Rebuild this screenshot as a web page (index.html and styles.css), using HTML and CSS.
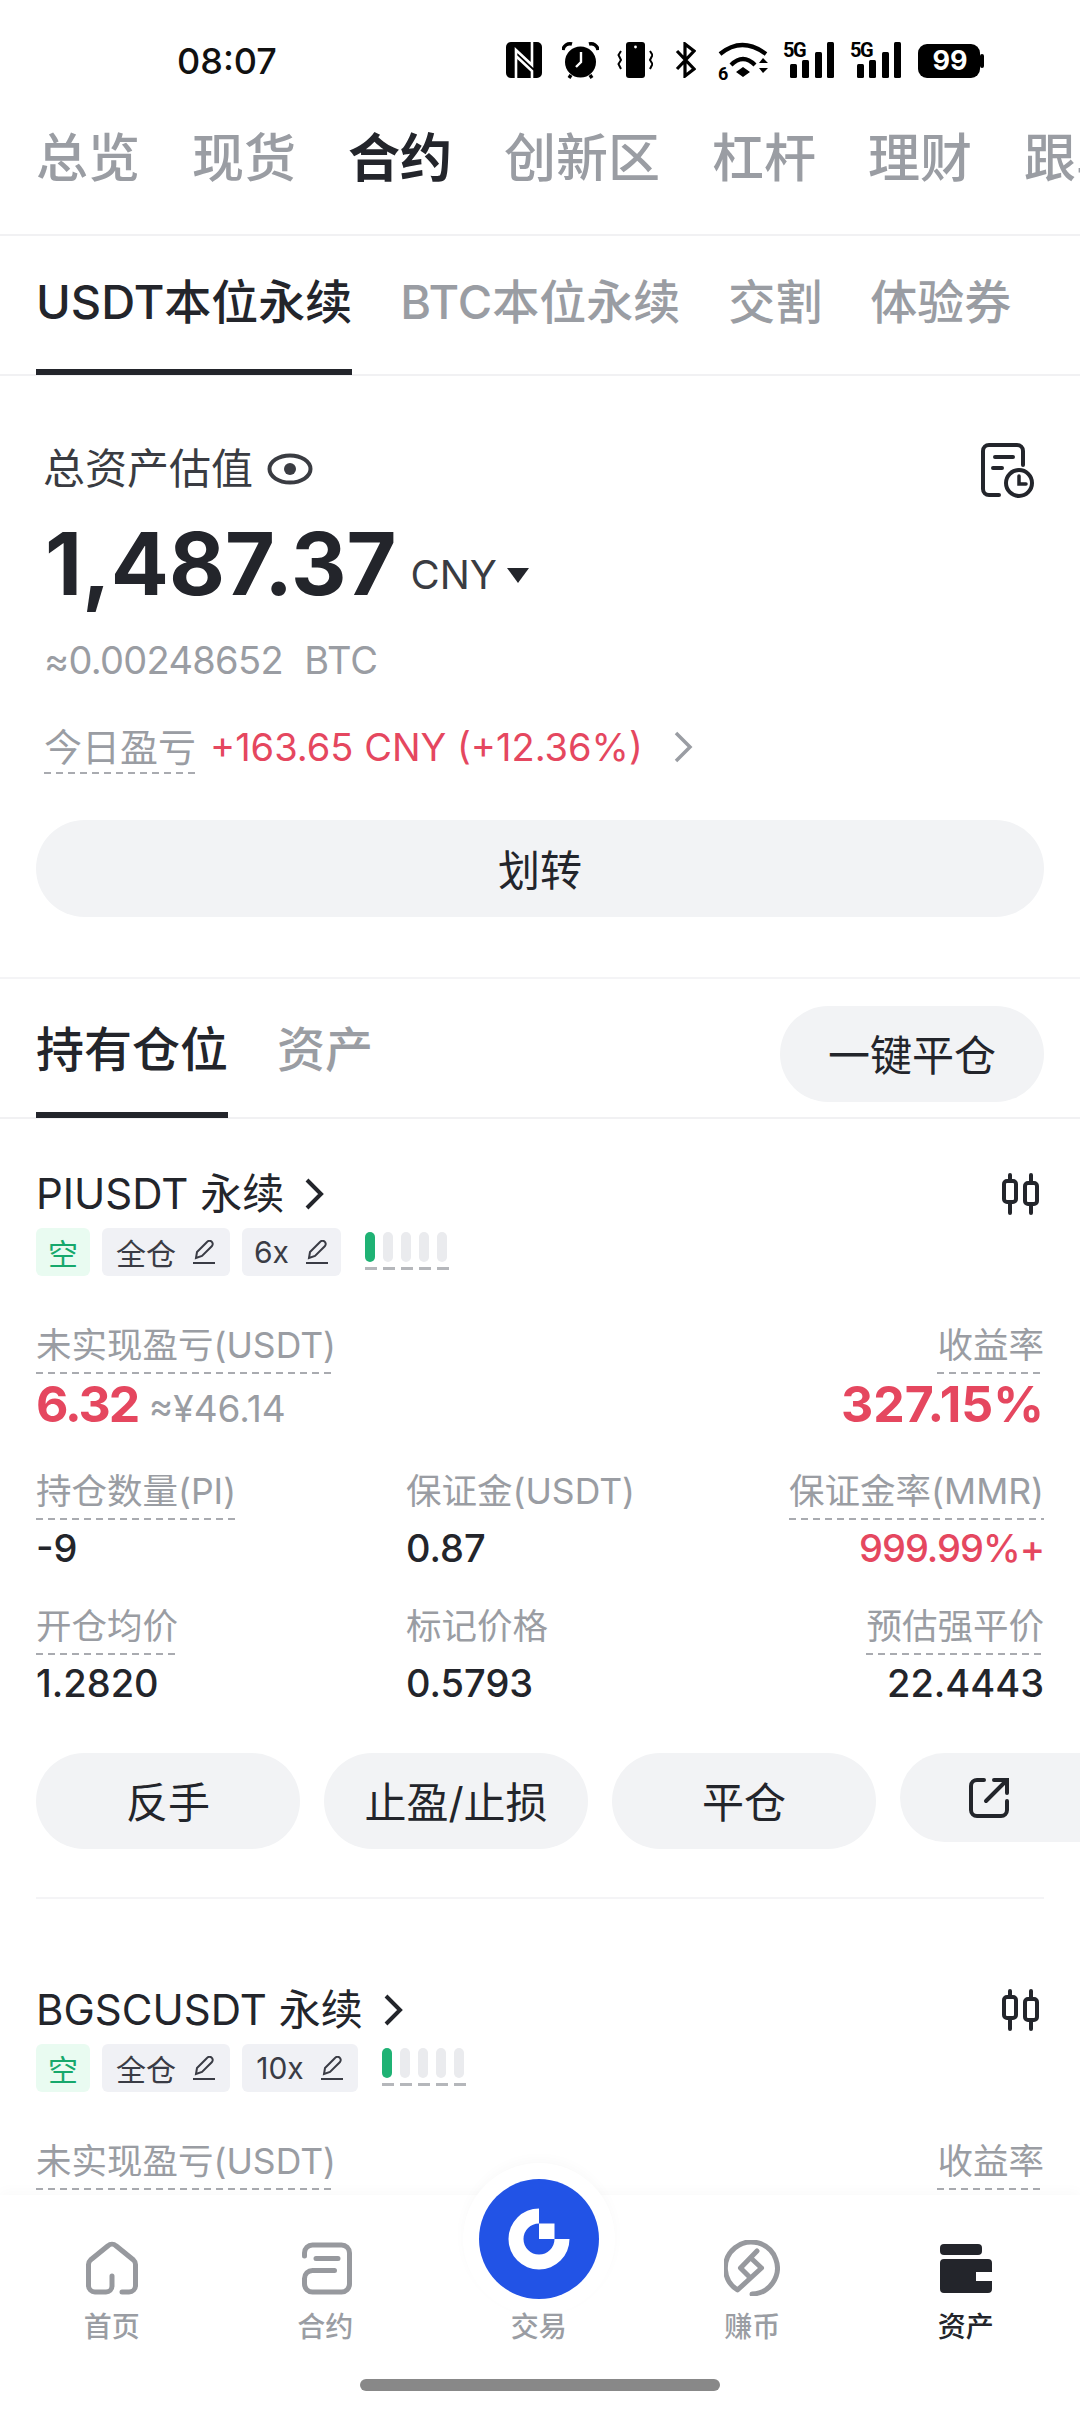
FILE: index.html
```html
<!DOCTYPE html>
<html lang="zh-CN">
<head>
    <meta charset="UTF-8">
    <meta name="viewport" content="width=device-width, initial-scale=1.0">
    <title>资产</title>
    <link rel="stylesheet" href="styles.css">
</head>
<body>
<div class="phone">
    <div class="status-bar">
        <span class="time">08:07</span>
        <div class="status-icons">
            <svg class="st-nfc" width="36" height="36" viewBox="0 0 36 36"><rect width="36" height="36" rx="5" fill="#000"/><path d="M10 36V8l16 15V0M10 14l16 15v7" fill="none" stroke="#fff" stroke-width="2.6"/></svg>
            <svg class="st-alarm" width="37" height="38" viewBox="0 0 37 38"><circle cx="18.5" cy="21" r="15.5" fill="#000"/><path d="M1 9a7 7 0 0 1 9-6M36 9a7 7 0 0 0-9-6M7 37l2-3M30 37l-2-3" fill="none" stroke="#000" stroke-width="3.4"/><path d="M19 11v10l-5 5" fill="none" stroke="#fff" stroke-width="2.4"/></svg>
            <svg class="st-vib" width="36" height="36" viewBox="0 0 36 36"><rect x="9" width="19" height="36" rx="3" fill="#000"/><circle cx="18.5" cy="5" r="1.4" fill="#fff"/><path d="M4 9l-2.500 4 2.500 5-2.500 4 2.500 5M33 9l2.500 4-2.500 5 2.500 4-2.500 5" fill="none" stroke="#000" stroke-width="2"/></svg>
            <svg class="st-bt" width="21" height="36" viewBox="0 0 21 36"><path d="M2 9l17 18-9 7V2l9 7L2 27" fill="none" stroke="#000" stroke-width="3.2"/></svg>
            <svg class="st-wifi" width="51" height="46" viewBox="0 0 51 46"><path d="M2 12Q24-6 48 12M13 23Q25 11 37 23" fill="none" stroke="#000" stroke-width="4.200"/><path d="M18 30l7-5 7 5-7 5zM41 21l4-5 5 5zM41 26h9l-5 5z" fill="#000"/><text class="st-num" x="0" y="38">6</text></svg>
            <svg class="st-sig" width="52" height="44" viewBox="0 -8 52 44"><text class="st-5g" x="0" y="15">5G</text><rect x="7" y="22" width="7" height="14" rx="1.500"/><rect x="19" y="18" width="7" height="18" rx="1.500"/><rect x="32" y="10" width="7" height="26" rx="1.500"/><rect x="44" width="7" height="36" rx="1.500"/></svg>
            <svg class="st-sig2" width="52" height="44" viewBox="0 -8 52 44"><text class="st-5g" x="0" y="15">5G</text><rect x="7" y="22" width="7" height="14" rx="1.500"/><rect x="19" y="18" width="7" height="18" rx="1.500"/><rect x="32" y="10" width="7" height="26" rx="1.500"/><rect x="44" width="7" height="36" rx="1.500"/></svg>
            <svg class="st-batt" width="66" height="34" viewBox="0 0 66 34"><rect width="62" height="34" rx="9"/><rect x="62" y="10" width="4" height="14" rx="2"/><text class="st-batt-num" x="32" y="26">99</text></svg>
        </div>
    </div>

    <div class="top-tabs">
        <span>总览</span>
        <span>现货</span>
        <span class="active">合约</span>
        <span>创新区</span>
        <span>杠杆</span>
        <span>理财</span>
        <span>跟单</span>
    </div>

    <div class="sub-tabs">
        <span class="sub-tab active">USDT本位永续</span>
        <span class="sub-tab">BTC本位永续</span>
        <span class="sub-tab">交割</span>
        <span class="sub-tab">体验券</span>
    </div>

    <section class="asset">
        <div class="asset-head">
            <div class="asset-title">
                总资产估值
                <svg width="46" height="32" viewBox="0 0 46 32"><ellipse cx="23" cy="16" rx="20.500" ry="13.500" fill="none" stroke="#3a3c42" stroke-width="4"/><circle cx="23" cy="16" r="6" fill="#3a3c42"/></svg>
            </div>
            <svg class="history" width="54" height="55" viewBox="0 0 54 55" fill="none" stroke="#23252b" stroke-width="4" stroke-linecap="round"><path d="M18 52H8a6 6 0 0 1-6-6V8a6 6 0 0 1 6-6h28a6 6 0 0 1 6 6v14M14 14h18M12 25h9"/><circle cx="38" cy="40" r="13"/><path d="M38 33v8h7" stroke-width="3.500"/></svg>
        </div>
        <div class="amount-row">
            <span class="amount">1,487.37</span>
            <span class="currency">CNY</span>
            <span class="caret"></span>
        </div>
        <div class="btc-row"><span class="btc-num">≈0.00248652</span>&nbsp; BTC</div>
        <div class="pnl-row">
            <span class="dotted pnl-label">今日盈亏</span>
            <span class="red">+163.65 CNY (+12.36%)</span>
            <svg width="20" height="32" viewBox="0 0 20 32" fill="none" stroke="#9a9da3" stroke-width="3.500"><path d="M3 2l14 14L3 30"/></svg>
        </div>
        <div class="pill wide-btn">划转</div>
    </section>

    <div class="pos-tabs">
        <span class="pos-tab active">持有仓位</span>
        <span class="pos-tab">资产</span>
        <div class="pill close-all">一键平仓</div>
    </div>

    <section class="card first">
        <div class="card-head">
            <div class="symbol">
                PIUSDT 永续
                <svg width="20" height="32" viewBox="0 0 20 32" fill="none" stroke="#23252b" stroke-width="4"><path d="M3 2l14 14L3 30"/></svg>
            </div>
            <svg class="candles" width="40" height="42" viewBox="0 0 40 42" fill="none" stroke="#23252b" stroke-width="4" stroke-linecap="round"><path d="M9 2v6M9 29v11M30 2v8M30 31v9"/><rect x="3" y="8" width="12" height="21" rx="3"/><rect x="24" y="10" width="12" height="21" rx="3"/></svg>
        </div>
        <div class="tags">
            <span class="tag tag-short">空</span>
            <span class="tag">全仓 <svg class="pencil" width="24" height="24" viewBox="0 0 24 24" fill="none" stroke="#3a3c45" stroke-width="2"><path d="M1 23h22M4 18l1-6L15 2a2.800 2.800 0 0 1 5 4L10 16z"/></svg></span>
            <span class="tag tag-6x">6x <svg class="pencil" width="24" height="24" viewBox="0 0 24 24" fill="none" stroke="#3a3c45" stroke-width="2"><path d="M1 23h22M4 18l1-6L15 2a2.800 2.800 0 0 1 5 4L10 16z"/></svg></span>
            <div class="lev">
                <i class="on"></i><i></i><i></i><i></i><i></i>
            </div>
        </div>
        <div class="pnl-head">
            <span class="dotted">未实现盈亏(USDT)</span>
            <span class="dotted">收益率</span>
        </div>
        <div class="pnl-main">
            <div><span class="big tight red">6.32</span> <span class="approx">≈¥46.14</span></div>
            <span class="big red">327.15%</span>
        </div>
        <div class="stats">
            <div class="stat"><span class="dotted">持仓数量(PI)</span><b>-9</b></div>
            <div class="stat"><span class="plain">保证金(USDT)</span><b>0.87</b></div>
            <div class="stat right"><span class="dotted">保证金率(MMR)</span><b class="red">999.99%+</b></div>
            <div class="stat"><span class="dotted">开仓均价</span><b>1.2820</b></div>
            <div class="stat"><span class="plain">标记价格</span><b>0.5793</b></div>
            <div class="stat right"><span class="dotted">预估强平价</span><b>22.4443</b></div>
        </div>
        <div class="actions">
            <div class="pill act">反手</div>
            <div class="pill act">止盈/止损</div>
            <div class="pill act">平仓</div>
            <div class="pill act">
                <svg width="40" height="41" viewBox="0 0 40 41" fill="none" stroke="#23252b" stroke-width="4" stroke-linecap="round"><path d="M15 3H8a6 6 0 0 0-6 6v24a6 6 0 0 0 6 6h24a6 6 0 0 0 6-6v-9M17 24L37 4M25 3h13v13"/></svg>
            </div>
        </div>
    </section>

    <section class="card second">
        <div class="card-head">
            <div class="symbol">
                BGSCUSDT 永续
                <svg width="20" height="32" viewBox="0 0 20 32" fill="none" stroke="#23252b" stroke-width="4"><path d="M3 2l14 14L3 30"/></svg>
            </div>
            <svg class="candles" width="40" height="42" viewBox="0 0 40 42" fill="none" stroke="#23252b" stroke-width="4" stroke-linecap="round"><path d="M9 2v6M9 29v11M30 2v8M30 31v9"/><rect x="3" y="8" width="12" height="21" rx="3"/><rect x="24" y="10" width="12" height="21" rx="3"/></svg>
        </div>
        <div class="tags">
            <span class="tag tag-short">空</span>
            <span class="tag">全仓 <svg class="pencil" width="24" height="24" viewBox="0 0 24 24" fill="none" stroke="#3a3c45" stroke-width="2"><path d="M1 23h22M4 18l1-6L15 2a2.800 2.800 0 0 1 5 4L10 16z"/></svg></span>
            <span class="tag tag-10x">10x <svg class="pencil" width="24" height="24" viewBox="0 0 24 24" fill="none" stroke="#3a3c45" stroke-width="2"><path d="M1 23h22M4 18l1-6L15 2a2.800 2.800 0 0 1 5 4L10 16z"/></svg></span>
            <div class="lev">
                <i class="on"></i><i></i><i></i><i></i><i></i>
            </div>
        </div>
        <div class="pnl-head">
            <span class="dotted">未实现盈亏(USDT)</span>
            <span class="dotted">收益率</span>
        </div>
    </section>

    <nav class="bottom-nav">
        <div class="nav-hump"></div>
        <div class="nav-items">
            <div class="nav-item">
                <svg width="56" height="56" viewBox="0 0 56 56" fill="none" stroke="#97999e" stroke-width="5" stroke-linecap="round"><path d="M28 36v10a6 6 0 0 1-6 6H11a6.500 6.500 0 0 1-6.500-6.500V24.500a6 6 0 0 1 2-4.500L24 5.800a6 6 0 0 1 8 0L49.500 20a6 6 0 0 1 2 4.500v21a6.500 6.500 0 0 1-6.500 6.500h-7"/></svg>
                <span>首页</span>
            </div>
            <div class="nav-item">
                <svg width="56" height="56" viewBox="0 0 56 56" fill="none" stroke="#97999e" stroke-width="5" stroke-linecap="round"><path d="M7.500 16v-3a8 8 0 0 1 8-8h29a8 8 0 0 1 8 8v31a8 8 0 0 1-8 8h-29a8 8 0 0 1-8-8v-5.500a8 8 0 0 1 8-8h22M19 18.500h22"/></svg>
                <span>合约</span>
            </div>
            <div class="nav-item">
                <svg class="trade-btn" width="120" height="120" viewBox="-60 -60 120 120"><circle r="60" fill="#2253e6"/><path d="M0-30.500A30.500 30.500 0 1 0 30.500 0H15.500V-15.500H0Z" fill="#fff"/><path d="M0-15.500A15.500 15.500 0 1 0 15.500 0H0Z" fill="#2253e6"/></svg>
                <span>交易</span>
            </div>
            <div class="nav-item">
                <svg width="56" height="56" viewBox="0 0 56 56" fill="none" stroke="#97999e" stroke-width="5" stroke-linecap="round" stroke-linejoin="round"><path d="M28 54A26 26 0 1 0 13.500 50L37.500 28 29 20M33 11L16.500 28 26.500 38"/></svg>
                <span>赚币</span>
            </div>
            <div class="nav-item active">
                <svg width="56" height="56" viewBox="0 0 56 56" fill="#23252b"><rect x="2" y="4" width="42" height="11" rx="4"/><path d="M6 19h44a4 4 0 0 1 4 4v9H38v9h16v8a4 4 0 0 1-4 4H6a4 4 0 0 1-4-4V23a4 4 0 0 1 4-4z"/></svg>
                <span>资产</span>
            </div>
        </div>
        <div class="home-bar"></div>
    </nav>
</div>
</body>
</html>
```

FILE: styles.css
```css
* {
    box-sizing: border-box;
}
body {
    margin: 0;
    background: #fff;
    font-family: Inter, "Noto Sans CJK SC", sans-serif;
    color: #23252b;
}
.phone {
    position: relative;
    width: 1080px;
    height: 2412px;
    overflow: hidden;
    background: #fff;
}
.red {
    color: #e5475f;
}
.dotted {
    padding-bottom: 8px;
    background: linear-gradient(to right, #a9abb0 60%, transparent 0) left bottom / 12px 2px repeat-x;
}

/* status bar */
.status-bar {
    display: flex;
    height: 74px;
    padding: 42px 0 0 177px;
}
.time {
    font-size: 36px;
    font-weight: 500;
    line-height: 38px;
    width: 329px;
    color: #111;
}
.status-icons {
    display: flex;
    align-items: flex-start;
}
.st-alarm { margin: -1px 0 0 20px; }
.st-vib { margin-left: 18px; }
.st-bt { margin-left: 22px; }
.st-wifi { margin-left: 22px; }
.st-sig { margin: -8px 0 0 14px; }
.st-sig2 { margin: -8px 0 0 15px; }
.st-batt { margin: 2px 0 0 16px; }
.st-num {
    font: 700 18px Roboto, sans-serif;
}
.st-5g {
    font: 700 20px Roboto, sans-serif;
    letter-spacing: -1.5px;
}
.st-batt-num {
    font: 700 27px Inter, sans-serif;
    fill: #fff;
    text-anchor: middle;
}

/* tabs */
.top-tabs {
    display: flex;
    gap: 52px;
    height: 162px;
    padding: 0 0 0 36px;
    align-items: center;
    overflow: hidden;
    white-space: nowrap;
    font-size: 52px;
    font-weight: 500;
    color: #9a9da3;
    border-bottom: 2px solid #f1f1f3;
}
.top-tabs .active {
    color: #23252b;
    font-weight: 700;
}
.sub-tabs {
    display: flex;
    gap: 48px;
    height: 140px;
    padding: 0 36px;
    font-size: 47px;
    font-weight: 500;
    color: #9a9da3;
    border-bottom: 2px solid #f1f1f3;
}
.sub-tab {
    height: 139px;
    padding-top: 41px;
    line-height: 50px;
}
.sub-tab.active {
    color: #23252b;
    border-bottom: 6px solid #23252b;
}

/* asset summary */
.asset {
    padding: 68px 36px 60px;
    border-bottom: 2px solid #f4f4f6;
}
.asset-head {
    display: flex;
    justify-content: space-between;
    align-items: flex-start;
    padding: 0 9px 0 7px;
}
.asset-title {
    display: flex;
    align-items: center;
    gap: 14px;
    font-size: 42px;
    line-height: 50px;
    color: #3a3c42;
}
.history {
    margin-top: -1px;
}
.amount-row {
    display: flex;
    align-items: center;
    height: 100px;
    margin-top: 16px;
    padding-left: 9px;
    line-height: 100px;
}
.amount {
    font-size: 86px;
    font-weight: 700;
}
.currency {
    margin: 22px 0 0 14px;
    font-size: 40px;
    color: #3a3c42;
}
.caret {
    margin: 22px 0 0 10px;
    border-left: 11px solid transparent;
    border-right: 11px solid transparent;
    border-top: 15px solid #23252b;
}
.btc-row {
    margin-top: 21px;
    padding-left: 8px;
    font-size: 38px;
    line-height: 50px;
    color: #9a9da3;
}
.btc-num {
    letter-spacing: -0.7px;
}
.pnl-row {
    display: flex;
    align-items: flex-start;
    margin-top: 37px;
    padding-left: 8px;
    font-size: 38px;
    line-height: 50px;
}
.pnl-label {
    color: #9a9da3;
    margin-right: 14px;
    padding-bottom: 2px;
}
.pnl-row svg {
    margin: 9px 0 0 30px;
}
.pill {
    display: flex;
    align-items: center;
    justify-content: center;
    padding-bottom: 3px;
    background: #f2f3f5;
    border-radius: 50px;
    color: #23252b;
}
.wide-btn {
    height: 97px;
    margin-top: 46px;
    font-size: 42px;
}

/* positions */
.pos-tabs {
    display: flex;
    gap: 49px;
    height: 140px;
    padding: 0 36px;
    font-size: 48px;
    font-weight: 500;
    color: #9a9da3;
    border-bottom: 2px solid #f1f1f3;
}
.pos-tab {
    height: 139px;
    padding-top: 41px;
    line-height: 60px;
}
.pos-tab.active {
    color: #23252b;
    border-bottom: 6px solid #23252b;
}
.close-all {
    width: 264px;
    height: 96px;
    margin: 27px 0 0 auto;
    padding-bottom: 4px;
    font-size: 42px;
    font-weight: 400;
}
.card {
    padding: 0 36px;
}
.card.first {
    padding-top: 50px;
}
.card.second {
    padding-top: 86px;
}
.card-head {
    display: flex;
    justify-content: space-between;
    align-items: center;
    height: 50px;
}
.candles {
    margin-right: 3px;
}
.symbol {
    display: flex;
    align-items: center;
    gap: 20px;
    font-size: 42px;
    line-height: 50px;
}
.tags {
    display: flex;
    gap: 12px;
    height: 48px;
    margin-top: 9px;
}
.tag {
    display: flex;
    align-items: center;
    gap: 16px;
    padding: 0 14px;
    font-size: 30px;
    color: #3a3c45;
    background: #f0f1f5;
    border-radius: 6px;
}
.tag-short {
    padding: 0 12px;
    color: #17a86c;
    background: #e9fbf1;
}
.tag-6x {
    width: 99px;
    padding: 0;
    justify-content: center;
}
.tag-10x {
    width: 116px;
    padding: 0;
    justify-content: center;
}
.lev {
    display: grid;
    grid-template-columns: repeat(5, 12px);
    column-gap: 6px;
    margin-left: 12px;
    padding-top: 4px;
}
.lev i {
    position: relative;
    display: block;
    width: 10px;
    height: 30px;
    background: #eaebee;
    border-radius: 5px;
}
.lev i.on {
    background: #1fb274;
}
.lev i::after {
    content: "";
    position: absolute;
    left: 0;
    top: 35px;
    width: 12px;
    height: 3px;
    background: #b5b7bb;
}
.pnl-head {
    display: flex;
    justify-content: space-between;
    margin-top: 50px;
    font-size: 35.5px;
    line-height: 40px;
    color: #9a9da3;
}
.pnl-head .dotted {
    padding-bottom: 8px;
    margin-bottom: 2px;
}
.pnl-main {
    display: flex;
    justify-content: space-between;
    align-items: baseline;
    height: 54px;
    line-height: 56px;
}
.big {
    font-size: 50px;
    font-weight: 700;
}
.big.tight {
    letter-spacing: -2px;
}
.approx {
    margin-left: 6px;
    font-size: 37px;
    color: #9a9da3;
}
.stats {
    display: grid;
    grid-template-columns: 370px 1fr auto;
    row-gap: 39px;
    margin-top: 42px;
}
.stat {
    display: flex;
    flex-direction: column;
    align-items: flex-start;
    font-size: 35.5px;
    line-height: 40px;
    color: #9a9da3;
}
.stat.right {
    align-items: flex-end;
}
.plain {
    padding-bottom: 8px;
}
.stat b {
    margin-top: 8px;
    font-size: 38px;
    font-weight: 500;
    color: #23252b;
}
.stat b.red {
    color: #e5475f;
    letter-spacing: -1px;
}
.actions {
    display: grid;
    grid-template-columns: repeat(4, 264px);
    column-gap: 24px;
    width: 1008px;
    height: 146px;
    margin-top: 50px;
    padding-bottom: 50px;
    border-bottom: 2px solid #f4f4f6;
}
.act {
    height: 96px;
    font-size: 42px;
}
.act:last-child {
    height: 89px;
    padding: 0 0 0 69px;
    justify-content: flex-start;
}

/* bottom nav, sits over the list */
.bottom-nav {
    position: absolute;
    left: 0;
    right: 0;
    bottom: 0;
    height: 217px;
    background: #fff;
    box-shadow: 0 -4px 12px rgba(0, 0, 0, 0.025);
}
.nav-hump {
    position: absolute;
    left: 463px;
    top: -32px;
    width: 152px;
    height: 152px;
    background: #fff;
    border-radius: 50%;
    box-shadow: 0 -4px 12px rgba(0, 0, 0, 0.025);
}
.nav-items {
    position: relative;
    display: grid;
    grid-template-columns: repeat(5, 213.5px);
    padding: 45px 0 0 5px;
}
.nav-item {
    position: relative;
    display: flex;
    flex-direction: column;
    align-items: center;
    gap: 13px;
    font-size: 28px;
    font-weight: 500;
    line-height: 36px;
    color: #9a9da3;
}
.nav-item.active {
    color: #23252b;
}
.nav-item .trade-btn {
    margin: -61px 0 -3px;
}
.home-bar {
    position: relative;
    width: 360px;
    height: 12px;
    margin: 34px auto 0;
    background: #888;
    border-radius: 6px;
}
```
